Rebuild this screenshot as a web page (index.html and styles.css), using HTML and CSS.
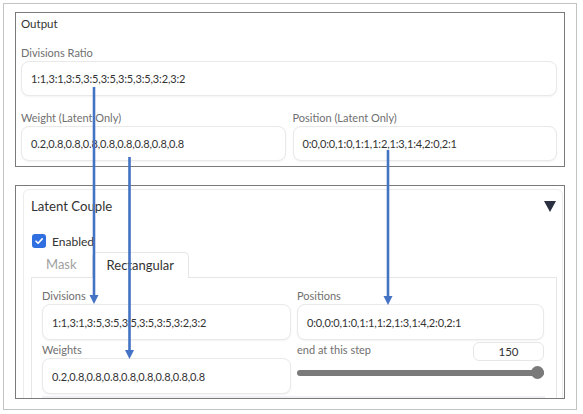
FILE: index.html
```html
<!DOCTYPE html>
<html>
<head>
<meta charset="utf-8">
<link rel="stylesheet" href="styles.css">
</head>
<body>
<div class="frame">
  <section class="out-box">
    <div class="out-title">Output</div>
    <div class="lbl lbl-first">Divisions Ratio</div>
    <div class="field">1:1,3:1,3:5,3:5,3:5,3:5,3:5,3:2,3:2</div>
    <div class="row">
      <div class="col">
        <div class="lbl">Weight (Latent Only)</div>
        <div class="field">0.2,0.8,0.8,0.8,0.8,0.8,0.8,0.8,0.8</div>
      </div>
      <div class="col">
        <div class="lbl">Position (Latent Only)</div>
        <div class="field">0:0,0:0,1:0,1:1,1:2,1:3,1:4,2:0,2:1</div>
      </div>
    </div>
  </section>

  <section class="lc-box">
    <div class="panel">
      <div class="panel-head">
        <span class="panel-title">Latent Couple</span>
        <span class="caret"></span>
      </div>
      <label class="check">
        <span class="checkbox">
          <svg width="14" height="14" viewBox="0 0 14 14"><path d="M4 7.2 L6.1 9.3 L10.2 4.9" fill="none" stroke="#fff" stroke-width="1.6" stroke-linecap="round" stroke-linejoin="round"/></svg>
        </span>
        <span class="check-text">Enabled</span>
      </label>
      <div class="tabs">
        <span class="tab">Mask</span>
        <span class="tab tab-active">Rectangular</span>
      </div>
      <div class="tab-body">
        <div class="grid">
          <div class="col">
            <div class="lbl">Divisions</div>
            <div class="field field-tall">1:1,3:1,3:5,3:5,3:5,3:5,3:5,3:2,3:2</div>
            <div class="lbl lbl-second">Weights</div>
            <div class="field field-tall">0.2,0.8,0.8,0.8,0.8,0.8,0.8,0.8,0.8</div>
          </div>
          <div class="col">
            <div class="lbl">Positions</div>
            <div class="field field-tall">0:0,0:0,1:0,1:1,1:2,1:3,1:4,2:0,2:1</div>
            <div class="step-row">
              <span class="lbl step-lbl">end at this step</span>
              <span class="num">150</span>
            </div>
            <div class="slider"><span class="thumb"></span></div>
          </div>
        </div>
        <div class="next-block"></div>
      </div>
    </div>
  </section>
</div>

<svg class="arrows" width="583" height="414" viewBox="0 0 583 414">
  <g stroke="#4472c4" stroke-width="2.6" fill="none">
    <line x1="94" y1="87" x2="94" y2="296"/>
    <line x1="129.5" y1="157" x2="129.5" y2="351"/>
    <line x1="388" y1="150" x2="388" y2="297"/>
  </g>
  <g fill="#4472c4">
    <polygon points="89.5,295 98.5,295 94,304"/>
    <polygon points="125,350 134,350 129.5,359"/>
    <polygon points="383.5,296 392.5,296 388,305"/>
  </g>
</svg>
</body>
</html>
```

FILE: styles.css
```css
* { box-sizing: border-box; }
html, body { margin: 0; padding: 0; background: #fff; }
body {
  width: 583px;
  height: 414px;
  overflow: hidden;
  position: relative;
  font-family: Lato, "Noto Sans", sans-serif;
  color: #333;
}
.frame {
  margin: 3px 0 0 3px;
  width: 574px;
  height: 407px;
  border: 1px solid #c3c3c3;
  padding: 8px 0 0 11px;
  display: flex;
  flex-direction: column;
}
.out-box {
  width: 550px;
  height: 155px;
  border: 1px solid #7a7a7a;
  padding: 0 7px 0 5px;
  display: flex;
  flex-direction: column;
}
.out-title {
  font-size: 11.5px;
  line-height: 22px;
  color: #333;
}
.lbl {
  font-size: 11px;
  line-height: 16px;
  color: #707070;
  height: 16px;
}
.lbl-first { margin-top: 10px; }
.field {
  height: 35px;
  border: 1px solid #e9e9e9;
  border-radius: 8px;
  box-shadow: 0 1px 2px rgba(0,0,0,0.05);
  padding: 0 9px;
  display: flex;
  align-items: center;
  font-size: 11px;
  letter-spacing: -0.15px;
  color: #333;
  background: #fff;
}
.row {
  display: flex;
  gap: 7px;
  margin-top: 14px;
}
.row .col { flex: 1; }

.lc-box {
  margin-top: 18px;
  width: 550px;
  height: 214px;
  border: 1px solid #7a7a7a;
  padding: 3px 1px 0 7px;
  overflow: hidden;
}
.panel {
  height: 260px;
  border: 1px solid #ececec;
  border-radius: 6px;
  padding: 0 0 0 7px;
}
.panel-head {
  height: 32px;
  display: flex;
  align-items: center;
  justify-content: space-between;
  padding-right: 6px;
}
.panel-title {
  font-size: 13.2px;
  color: #333;
}
.caret {
  width: 0; height: 0;
  border-left: 6px solid transparent;
  border-right: 6px solid transparent;
  border-top: 11px solid #2b3140;
  margin-top: 1px;
}
.check {
  display: flex;
  align-items: center;
  height: 22px;
  margin-top: 8px;
}
.checkbox {
  width: 14px; height: 14px;
  border-radius: 3px;
  background: #2f6fe0;
  display: inline-flex;
  margin-left: 1px;
}
.check-text {
  margin-left: 6px;
  font-size: 12px;
  color: #333;
}
.tabs {
  display: flex;
  height: 26px;
  align-items: flex-end;
  margin-top: -1px;
}
.tab {
  font-size: 13px;
  color: #a0a0a0;
  height: 25px;
  line-height: 25px;
  padding: 0 14px;
}
.tab-active {
  color: #333;
  border: 1px solid #e6e6e6;
  border-bottom: none;
  border-radius: 5px 5px 0 0;
  height: 26px;
  background: #fff;
  margin-bottom: -1px;
  position: relative;
}
.tabs .tab:first-child { padding: 0 15px 0 15px; }
.tab-body {
  width: 526px;
  border: 1px solid #e6e6e6;
  padding: 10px 11px 0 10px;
}
.grid {
  display: grid;
  grid-template-columns: 249px 247px;
  column-gap: 6px;
}
.grid .col { display: flex; flex-direction: column; }
.field-tall { height: 36px; }
.lbl-second { margin-top: 2px; }
.step-row {
  display: flex;
  justify-content: space-between;
  align-items: flex-start;
  height: 20px;
  margin-top: 2px;
}
.step-lbl { line-height: 16px; }
.num {
  width: 71px;
  height: 19px;
  border: 1px solid #e6e6e6;
  border-radius: 6px;
  text-align: center;
  font-size: 11.5px;
  line-height: 17px;
  color: #333;
}
.slider {
  position: relative;
  height: 6px;
  background: #7a7a7a;
  border-radius: 3px;
  margin-top: 8px;
}
.thumb {
  position: absolute;
  right: 0;
  top: -4px;
  width: 13px;
  height: 13px;
  border-radius: 50%;
  background: #7a7a7a;
}
.next-block {
  margin-top: 2px;
  height: 10px;
  background: #f0f1f5;
}
.arrows {
  position: absolute;
  left: 0;
  top: 0;
  pointer-events: none;
}
```
